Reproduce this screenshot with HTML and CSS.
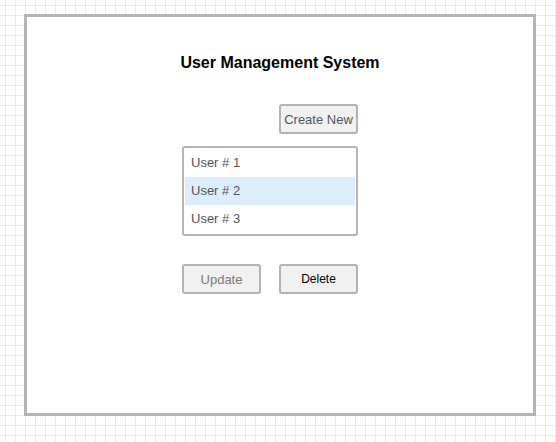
FILE: index.html
```html
<!DOCTYPE html>
<html lang="en">
<head>
<meta charset="utf-8">
<title>User Management System</title>
<link rel="stylesheet" href="styles.css">
</head>
<body>
  <div class="frame">
    <h1 class="title">User Management System</h1>
    <div class="panel">
      <div class="create-row">
        <button class="btn">Create New</button>
      </div>
      <ul class="list">
        <li class="item">User # 1</li>
        <li class="item selected">User # 2</li>
        <li class="item">User # 3</li>
      </ul>
      <div class="actions">
        <button class="btn btn-disabled">Update</button>
        <button class="btn btn-delete">Delete</button>
      </div>
    </div>
  </div>
</body>
</html>
```

FILE: styles.css
```css
html, body {
  margin: 0;
  padding: 0;
}

body {
  width: 556px;
  height: 442px;
  overflow: hidden;
  font-family: "Liberation Sans", Arial, sans-serif;
  background-color: #ffffff;
  background-image:
    linear-gradient(to right, #ece9f6 1px, transparent 1px),
    linear-gradient(to bottom, #ece9f6 1px, transparent 1px);
  background-size: 10px 10px;
  background-position: 5px 5px;
}

.frame {
  box-sizing: border-box;
  width: 512px;
  height: 402px;
  margin: 14px 0 0 24px;
  border: 3px solid #b5b5b5;
  background: #ffffff;
  padding-top: 37px;
  display: flow-root;
}

.title {
  margin: 0;
  text-align: center;
  font-size: 16px;
  line-height: 18px;
  font-weight: 700;
  color: #000000;
}

.panel {
  width: 176px;
  margin: 32px 0 0 155px;
}

.create-row {
  display: flex;
  justify-content: flex-end;
}

.btn {
  box-sizing: border-box;
  width: 79px;
  height: 30px;
  padding: 0;
  border: 2px solid #b3b3b3;
  border-radius: 3px;
  background: #f1f1f1;
  font-family: "Liberation Sans", Arial, sans-serif;
  font-size: 13px;
  color: #555555;
}

.btn-disabled {
  color: #7a7a7a;
}

.btn-delete {
  color: #000000;
  font-size: 12px;
}

.list {
  box-sizing: border-box;
  list-style: none;
  margin: 12px 0 0 0;
  padding: 1px;
  height: 90px;
  border: 2px solid #b5b5b5;
  border-radius: 3px;
  background: #ffffff;
}

.item {
  height: 28px;
  line-height: 28px;
  padding-left: 6px;
  font-size: 13px;
  color: #555555;
}

.item.selected {
  background: #dcedfb;
}

.actions {
  display: flex;
  justify-content: space-between;
  margin-top: 28px;
}
```
